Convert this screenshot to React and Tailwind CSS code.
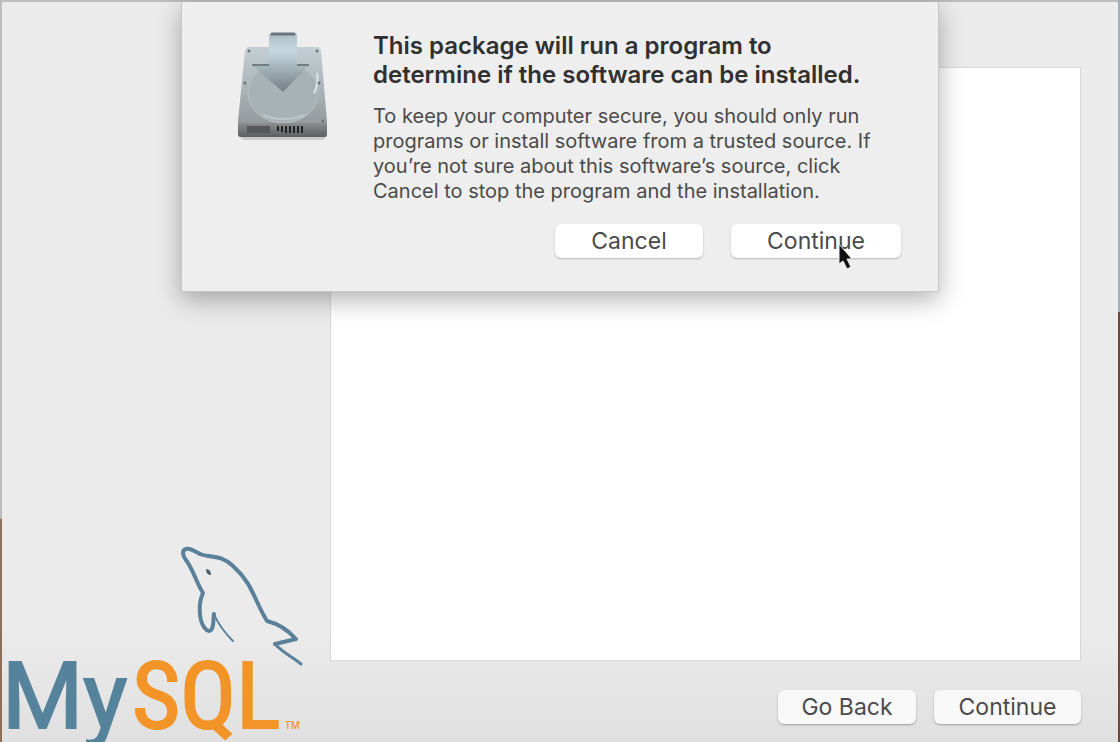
const InstallerIcon = () => (
  <svg width="96" height="112" viewBox="0 0 96 112" aria-hidden="true">
    <defs>
      <linearGradient id="case" x1="0" y1="0" x2="0" y2="1">
        <stop offset="0" stopColor="#c3cfd4" />
        <stop offset="0.5" stopColor="#a9b2b6" />
        <stop offset="1" stopColor="#8a8f92" />
      </linearGradient>
      <linearGradient id="arrow" x1="0" y1="0" x2="0" y2="1">
        <stop offset="0" stopColor="#aebcc3" />
        <stop offset="0.3" stopColor="#c6d9e2" />
        <stop offset="0.6" stopColor="#a3b1b8" />
        <stop offset="1" stopColor="#747e83" />
      </linearGradient>
      <linearGradient id="front" x1="0" y1="0" x2="0" y2="1">
        <stop offset="0" stopColor="#8b8f91" />
        <stop offset="1" stopColor="#5c5e60" />
      </linearGradient>
    </defs>
    <path d="M4 105h88l-4 4H8z" fill="#cccccc" />
    <path d="M14 16h68q3 0 4 4l6 70v13q0 3-3 3H6q-3 0-3-3V90l7-70q1-4 4-4z" fill="url(#case)" />
    <ellipse cx="48" cy="62" rx="35" ry="30" fill="#a8b2b6" stroke="#b6c0c4" />
    <path d="M28 84q20 8 42 0" fill="none" stroke="#bdc6c9" strokeWidth="2" />
    <path d="M82 42q2 10-3 20" fill="none" stroke="#dde6ea" strokeWidth="2" />
    <path d="M3 92h89v11q0 3-3 3H6q-3 0-3-3z" fill="url(#front)" />
    <path d="M12 95h23v7H12z" fill="#55585a" />
    <path d="M43 95v5M47 95v6M51 95v7M55 95v7M59 95v7M63 95v7M67 95v7" stroke="#222" strokeWidth="2" />
    <path d="M34 5q0-3 3-3h22q3 0 3 3v29h12L48 61 17 34h17z" fill="url(#arrow)" />
    <path d="M37 3h22" stroke="#68747a" strokeWidth="3" strokeLinecap="round" />
    <path d="M17 34h17M62 34h12" stroke="#727d82" strokeWidth="2" />
    <g fill="#6c7375">
      <circle cx="14" cy="20" r="1.5" />
      <circle cx="82" cy="20" r="1.5" />
      <circle cx="10" cy="52" r="1.5" />
      <circle cx="84" cy="52" r="1.5" />
      <circle cx="88" cy="90" r="1.5" />
    </g>
  </svg>
);

const MySqlLogo = () => (
  <svg width="320" height="210" viewBox="0 0 320 210" role="img" aria-label="MySQL">
    <g fill="none" stroke="#5a8199" strokeLinecap="round" strokeLinejoin="round">
      <path
        d="M198 22C191 18 187 16 184 17C180 18 180 23 184 28C192 39 194 50 201 61C196 72 197 88 202 95C206 101 210 100 211 93C212 88 211 85 212 82"
        strokeWidth="4"
      />
      <path d="M198 22C208 26 218 22 231 34C251 52 252 68 265 89C277 92 286 98 294 107L273 112" strokeWidth="4" />
      <path d="M212 82C216 92 223 101 231 109" strokeWidth="2" />
      <path d="M273 112C281 121 291 125 299 132" strokeWidth="3" />
    </g>
    <path d="M204 37q5 0 5 6q-5 0-5-6z" fill="#4c5f6b" />
    <text
      x="0"
      y="196"
      fontSize="93"
      fill="#56839c"
      stroke="#56839c"
      strokeWidth="2"
      className="font-['Roboto',sans-serif]"
    >
      My
    </text>
    <text
      x="130"
      y="196"
      fontSize="93"
      fill="#f29427"
      stroke="#f29427"
      strokeWidth="2"
      className="font-['Roboto_Condensed',sans-serif]"
    >
      SQL
    </text>
    <text x="283" y="197" fontSize="10" fill="#f29427" className="font-['Open_Sans',sans-serif] font-semibold">
      TM
    </text>
  </svg>
);

const App = () => {
  return (
    <div className="relative flex min-h-screen overflow-hidden font-['Inter','Liberation_Sans',sans-serif] text-[#4a4a4a]">
      <div className="w-[2px] bg-linear-to-b from-[#bcbcbc] from-70% to-[#8d6f5a] to-70%" />
      <main className="flex flex-1 border-t-2 border-[#bcbcbc] bg-linear-to-b from-[#ebebeb] from-85% to-[#e0e0e0]">
        <aside className="flex w-[328px] flex-col justify-end">
          <MySqlLogo />
        </aside>
        <section className="flex flex-1 flex-col pt-[65px] pr-[37px]">
          <div className="flex-1 border border-[#d8d8d8] bg-white" />
          <footer className="flex justify-end gap-[18px] pt-[29px] pb-[18px]">
            <button className="h-[34px] w-[138px] rounded-md bg-[#f8f8f8] text-[23px] leading-[34px] shadow-[0_1px_2px_rgba(0,0,0,0.3)]">
              Go Back
            </button>
            <button className="h-[34px] w-[147px] rounded-md bg-[#f8f8f8] text-[23px] leading-[34px] shadow-[0_1px_2px_rgba(0,0,0,0.3)]">
              Continue
            </button>
          </footer>
        </section>
      </main>
      <div className="w-[2px] bg-linear-to-b from-[#9fb0c4] from-42% to-[#6b4a38] to-42%" />

      <div
        role="dialog"
        aria-labelledby="sheet-title"
        className="absolute top-[2px] left-1/2 w-[758px] -translate-x-1/2 border border-t-0 border-[#c6c6c6] bg-[#eeeeee] pt-[29px] pr-[37px] pb-[33px] pl-[53px] shadow-[0_8px_24px_rgba(0,0,0,0.3)]"
      >
        <div className="flex gap-[42px]">
          <InstallerIcon />
          <div className="flex-1">
            <h1 id="sheet-title" className="text-[24px] leading-[29px] font-semibold text-[#303030]">
              This package will run a program to
              <br />
              determine if the software can be installed.
            </h1>
            <p className="mt-[15px] text-[20px] leading-[25px]">
              To keep your computer secure, you should only run
              <br />
              programs or install software from a trusted source. If
              <br />
              you’re not sure about this software’s source, click
              <br />
              Cancel to stop the program and the installation.
            </p>
          </div>
        </div>
        <div className="mt-[20px] flex justify-end gap-[28px]">
          <button className="h-[34px] w-[148px] rounded-md bg-white text-[23px] leading-[34px] shadow-[0_1px_2px_rgba(0,0,0,0.25)]">
            Cancel
          </button>
          <button className="relative h-[34px] w-[170px] rounded-md bg-white text-[23px] leading-[34px] shadow-[0_1px_2px_rgba(0,0,0,0.25)]">
            Continue
            <svg className="absolute top-[19px] left-[106px]" width="18" height="30" viewBox="0 0 18 30" aria-hidden="true">
              <path d="M2 1v20l4-3 4 8 4-2-4-8h5z" fill="#111" stroke="#eee" />
            </svg>
          </button>
        </div>
      </div>
    </div>
  );
};
export default App;
